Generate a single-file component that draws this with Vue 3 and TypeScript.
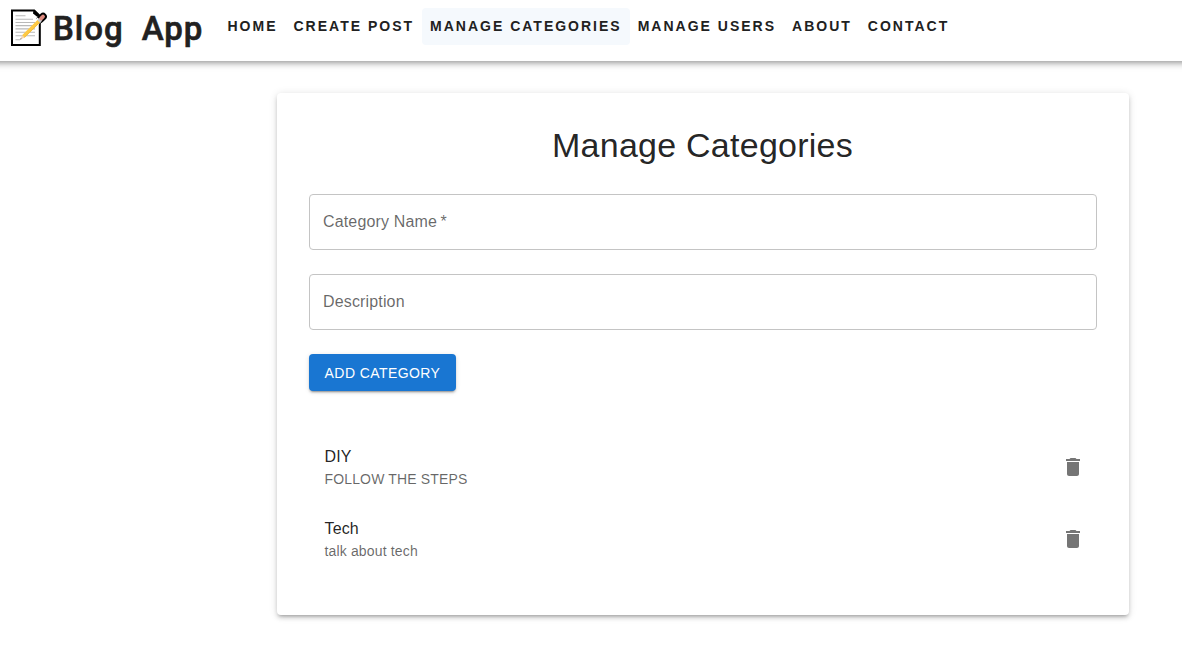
<script setup lang="ts">
import { ref } from 'vue'

interface Category {
  name: string
  description: string
}

const links: string[] = ['Home', 'Create Post', 'Manage Categories', 'Manage Users', 'About', 'Contact']
const active = ref('Manage Categories')

const categories = ref<Category[]>([
  { name: 'DIY', description: 'FOLLOW THE STEPS' },
  { name: 'Tech', description: 'talk about tech' },
])

function remove(index: number): void {
  categories.value.splice(index, 1)
}
</script>

<template>
  <div class="page">
    <header class="app-bar">
      <svg class="logo" viewBox="0 0 38 40" width="38" height="40" aria-hidden="true">
        <path d="M3 2.600H25.300L30.800 8V37H3Z" fill="#fff" stroke="#000" stroke-width="2" />
        <path d="M24.500 1.800L30 7L28.500 9L24 5.500Z" fill="#000" />
        <path d="M6.500 7.700H16.500M6.500 11.300H24M6.500 14.500H26M6.500 17.600H26M6.500 20.900H26M6.500 24.200H26M6.500 27.800H26M6.500 31.700H11" stroke="#b9b9b9" stroke-width="1.100" />
        <path d="M31.200 11.300L34.100 8.500" stroke="#000" stroke-width="7.400" stroke-linecap="round" />
        <path d="M27 15L30.500 11.500" stroke="#fff" stroke-width="5.500" />
        <path d="M14.300 28.500L30 13" stroke="#fdc944" stroke-width="3.600" />
        <path d="M15.300 29.500L31 14" stroke="#f4b52f" stroke-width=".8" />
        <path d="M29.700 13.300L32 11" stroke="#c7cbd0" stroke-width="3.800" />
        <path d="M32.200 10.400L34 8.600" stroke="#df8b80" stroke-width="3.800" stroke-linecap="round" />
        <path d="M13 27.300L15.600 29.800L11.200 31.600Z" fill="#f3d5b5" />
        <path d="M11 31.700L11.800 30L12.800 31Z" fill="#777" />
      </svg>
      <span class="brand"><span>Blog</span><span class="brand-second">App</span></span>
      <nav class="nav">
        <a
          v-for="link in links"
          :key="link"
          class="nav-link"
          :class="{ active: link === active }"
          @click="active = link"
        >{{ link }}</a>
      </nav>
    </header>

    <main class="paper">
      <h1 class="title">Manage Categories</h1>
      <div class="field"><label>Category Name<span class="asterisk"> *</span></label></div>
      <div class="field"><label>Description</label></div>
      <button class="add" type="button">Add Category</button>
      <ul class="list">
        <li v-for="(category, i) in categories" :key="category.name" class="item">
          <div class="item-text">
            <span class="primary">{{ category.name }}</span>
            <p class="secondary">{{ category.description }}</p>
          </div>
          <button class="delete" type="button" aria-label="delete" @click="remove(i)">
            <svg viewBox="0 0 24 24" width="24" height="24">
              <path d="M6 19c0 1.100.9 2 2 2h8c1.100 0 2-.9 2-2V7H6v12zM19 4h-3.500l-1-1h-5l-1 1H5v2h14V4z" fill="currentColor" />
            </svg>
          </button>
        </li>
      </ul>
    </main>
  </div>
</template>

<style>
body {
  margin: 0;
  background: #fff;
}
</style>

<style scoped>
.page {
  min-height: 100vh;
  overflow: hidden;
}
.app-bar {
  display: flex;
  align-items: flex-start;
  box-sizing: border-box;
  height: 61px;
  margin: 0 -12px;
  padding: 8px 21px 0;
  background: #fff;
  color: #212121;
  font-family: "Liberation Sans", Arial, sans-serif;
  box-shadow: 0 2px 4px -1px rgba(0, 0, 0, .2), 0 4px 5px 0 rgba(0, 0, 0, .14), 0 1px 10px 0 rgba(0, 0, 0, .12);
}
.logo {
  flex: none;
}
.brand {
  display: flex;
  width: 165px;
  margin-left: 6px;
  font: 500 33px/42px "Comic Sans MS", Roboto, sans-serif;
  letter-spacing: 1px;
  -webkit-text-stroke: .6px #212121;
  white-space: nowrap;
}
.brand-second {
  margin-left: 18px;
}
.nav {
  display: flex;
  margin-left: 1.5px;
}
.nav-link {
  padding: 6px 8px;
  border-radius: 4px;
  font-size: 14px;
  font-weight: 700;
  line-height: 24.5px;
  letter-spacing: 2px;
  text-transform: uppercase;
  white-space: nowrap;
  cursor: pointer;
}
.nav-link.active {
  background: #f5f9fd;
}
.paper {
  box-sizing: border-box;
  width: 852px;
  margin: 32px 0 0 277px;
  padding: 32px;
  border-radius: 4px;
  background: #fff;
  color: rgba(0, 0, 0, .87);
  font-family: "Liberation Sans", Arial, sans-serif;
  box-shadow: 0 3px 3px -2px rgba(0, 0, 0, .2), 0 3px 4px 0 rgba(0, 0, 0, .14), 0 1px 8px 0 rgba(0, 0, 0, .12);
}
.title {
  margin: 0 1px 29px 0;
  font-size: 34px;
  font-weight: 400;
  line-height: 40px;
  letter-spacing: .25px;
  text-align: center;
}
.field {
  display: flex;
  align-items: center;
  box-sizing: border-box;
  height: 56px;
  margin-bottom: 24px;
  padding: 0 13px;
  border: 1px solid #c4c4c4;
  border-radius: 4px;
  color: rgba(0, 0, 0, .6);
  font-size: 16px;
  letter-spacing: .15px;
}
.asterisk {
  margin-left: -1px;
  white-space: pre;
}
.add {
  display: block;
  box-sizing: border-box;
  width: 147px;
  height: 36.5px;
  padding: 7px 0 5px;
  border: 0;
  border-radius: 4px;
  background: #1976d2;
  color: #fff;
  font: 400 14px/24.5px "Liberation Sans", Arial, sans-serif;
  letter-spacing: .42px;
  text-transform: uppercase;
  white-space: nowrap;
  box-shadow: 0 3px 1px -2px rgba(0, 0, 0, .2), 0 2px 2px 0 rgba(0, 0, 0, .14), 0 1px 5px 0 rgba(0, 0, 0, .12);
}
.list {
  margin: 32px 0 0;
  padding: 8px 0;
  list-style: none;
}
.item {
  display: flex;
  align-items: center;
  justify-content: space-between;
  height: 72px;
  padding: 0 12px 0 15.5px;
}
.primary {
  display: block;
  font-size: 16px;
  line-height: 24px;
  letter-spacing: .15px;
}
.secondary {
  margin: 0;
  color: rgba(0, 0, 0, .6);
  font-size: 14px;
  line-height: 20px;
  letter-spacing: .15px;
}
.delete {
  display: flex;
  padding: 0;
  border: 0;
  background: none;
  color: rgba(0, 0, 0, .54);
  cursor: pointer;
}
</style>
